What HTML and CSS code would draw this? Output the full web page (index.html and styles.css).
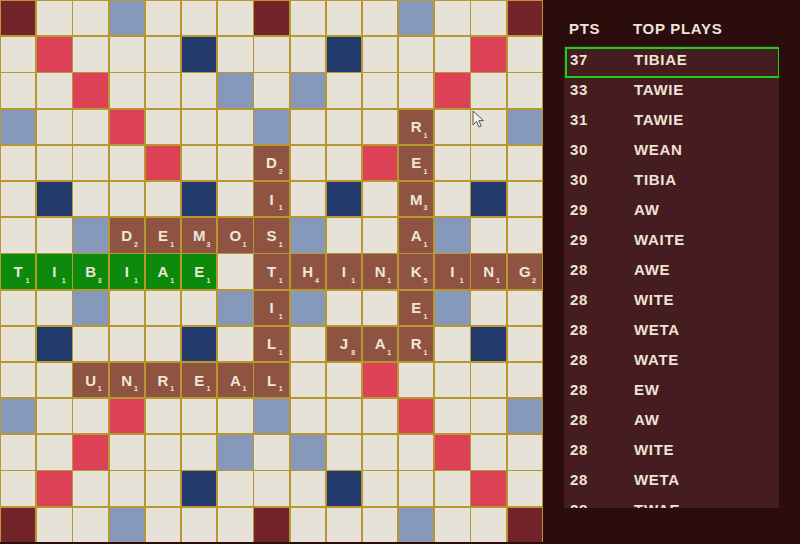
FILE: index.html
```html
<!DOCTYPE html>
<html>
<head>
<meta charset="utf-8">
<link rel="stylesheet" href="styles.css">
</head>
<body>
<div class="app">
  <div class="board">
    <!-- row 0 -->
    <div class="sq tw"></div><div class="sq"></div><div class="sq"></div><div class="sq dl"></div><div class="sq"></div><div class="sq"></div><div class="sq"></div><div class="sq tw"></div><div class="sq"></div><div class="sq"></div><div class="sq"></div><div class="sq dl"></div><div class="sq"></div><div class="sq"></div><div class="sq tw"></div>
    <!-- row 1 -->
    <div class="sq"></div><div class="sq dw"></div><div class="sq"></div><div class="sq"></div><div class="sq"></div><div class="sq tl"></div><div class="sq"></div><div class="sq"></div><div class="sq"></div><div class="sq tl"></div><div class="sq"></div><div class="sq"></div><div class="sq"></div><div class="sq dw"></div><div class="sq"></div>
    <!-- row 2 -->
    <div class="sq"></div><div class="sq"></div><div class="sq dw"></div><div class="sq"></div><div class="sq"></div><div class="sq"></div><div class="sq dl"></div><div class="sq"></div><div class="sq dl"></div><div class="sq"></div><div class="sq"></div><div class="sq"></div><div class="sq dw"></div><div class="sq"></div><div class="sq"></div>
    <!-- row 3 -->
    <div class="sq dl"></div><div class="sq"></div><div class="sq"></div><div class="sq dw"></div><div class="sq"></div><div class="sq"></div><div class="sq"></div><div class="sq dl"></div><div class="sq"></div><div class="sq"></div><div class="sq"></div><div class="sq t">R<i>1</i></div><div class="sq"></div><div class="sq"></div><div class="sq dl"></div>
    <!-- row 4 -->
    <div class="sq"></div><div class="sq"></div><div class="sq"></div><div class="sq"></div><div class="sq dw"></div><div class="sq"></div><div class="sq"></div><div class="sq t">D<i>2</i></div><div class="sq"></div><div class="sq"></div><div class="sq dw"></div><div class="sq t">E<i>1</i></div><div class="sq"></div><div class="sq"></div><div class="sq"></div>
    <!-- row 5 -->
    <div class="sq"></div><div class="sq tl"></div><div class="sq"></div><div class="sq"></div><div class="sq"></div><div class="sq tl"></div><div class="sq"></div><div class="sq t">I<i>1</i></div><div class="sq"></div><div class="sq tl"></div><div class="sq"></div><div class="sq t">M<i>3</i></div><div class="sq"></div><div class="sq tl"></div><div class="sq"></div>
    <!-- row 6 -->
    <div class="sq"></div><div class="sq"></div><div class="sq dl"></div><div class="sq t">D<i>2</i></div><div class="sq t">E<i>1</i></div><div class="sq t">M<i>3</i></div><div class="sq t">O<i>1</i></div><div class="sq t">S<i>1</i></div><div class="sq dl"></div><div class="sq"></div><div class="sq"></div><div class="sq t">A<i>1</i></div><div class="sq dl"></div><div class="sq"></div><div class="sq"></div>
    <!-- row 7 -->
    <div class="sq t g">T<i>1</i></div><div class="sq t g">I<i>1</i></div><div class="sq t g">B<i>3</i></div><div class="sq t g">I<i>1</i></div><div class="sq t g">A<i>1</i></div><div class="sq t g">E<i>1</i></div><div class="sq"></div><div class="sq t">T<i>1</i></div><div class="sq t">H<i>4</i></div><div class="sq t">I<i>1</i></div><div class="sq t">N<i>1</i></div><div class="sq t">K<i>5</i></div><div class="sq t">I<i>1</i></div><div class="sq t">N<i>1</i></div><div class="sq t">G<i>2</i></div>
    <!-- row 8 -->
    <div class="sq"></div><div class="sq"></div><div class="sq dl"></div><div class="sq"></div><div class="sq"></div><div class="sq"></div><div class="sq dl"></div><div class="sq t">I<i>1</i></div><div class="sq dl"></div><div class="sq"></div><div class="sq"></div><div class="sq t">E<i>1</i></div><div class="sq dl"></div><div class="sq"></div><div class="sq"></div>
    <!-- row 9 -->
    <div class="sq"></div><div class="sq tl"></div><div class="sq"></div><div class="sq"></div><div class="sq"></div><div class="sq tl"></div><div class="sq"></div><div class="sq t">L<i>1</i></div><div class="sq"></div><div class="sq t">J<i>8</i></div><div class="sq t">A<i>1</i></div><div class="sq t">R<i>1</i></div><div class="sq"></div><div class="sq tl"></div><div class="sq"></div>
    <!-- row 10 -->
    <div class="sq"></div><div class="sq"></div><div class="sq t">U<i>1</i></div><div class="sq t">N<i>1</i></div><div class="sq t">R<i>1</i></div><div class="sq t">E<i>1</i></div><div class="sq t">A<i>1</i></div><div class="sq t">L<i>1</i></div><div class="sq"></div><div class="sq"></div><div class="sq dw"></div><div class="sq"></div><div class="sq"></div><div class="sq"></div><div class="sq"></div>
    <!-- row 11 -->
    <div class="sq dl"></div><div class="sq"></div><div class="sq"></div><div class="sq dw"></div><div class="sq"></div><div class="sq"></div><div class="sq"></div><div class="sq dl"></div><div class="sq"></div><div class="sq"></div><div class="sq"></div><div class="sq dw"></div><div class="sq"></div><div class="sq"></div><div class="sq dl"></div>
    <!-- row 12 -->
    <div class="sq"></div><div class="sq"></div><div class="sq dw"></div><div class="sq"></div><div class="sq"></div><div class="sq"></div><div class="sq dl"></div><div class="sq"></div><div class="sq dl"></div><div class="sq"></div><div class="sq"></div><div class="sq"></div><div class="sq dw"></div><div class="sq"></div><div class="sq"></div>
    <!-- row 13 -->
    <div class="sq"></div><div class="sq dw"></div><div class="sq"></div><div class="sq"></div><div class="sq"></div><div class="sq tl"></div><div class="sq"></div><div class="sq"></div><div class="sq"></div><div class="sq tl"></div><div class="sq"></div><div class="sq"></div><div class="sq"></div><div class="sq dw"></div><div class="sq"></div>
    <!-- row 14 -->
    <div class="sq tw"></div><div class="sq"></div><div class="sq"></div><div class="sq dl"></div><div class="sq"></div><div class="sq"></div><div class="sq"></div><div class="sq tw"></div><div class="sq"></div><div class="sq"></div><div class="sq"></div><div class="sq dl"></div><div class="sq"></div><div class="sq"></div><div class="sq tw"></div>
  </div>

  <div class="panel">
    <div class="head"><span class="pts">PTS</span><span>TOP PLAYS</span></div>
    <div class="list">
      <div class="row sel"><span class="pts">37</span><span>TIBIAE</span></div>
      <div class="row"><span class="pts">33</span><span>TAWIE</span></div>
      <div class="row"><span class="pts">31</span><span>TAWIE</span></div>
      <div class="row"><span class="pts">30</span><span>WEAN</span></div>
      <div class="row"><span class="pts">30</span><span>TIBIA</span></div>
      <div class="row"><span class="pts">29</span><span>AW</span></div>
      <div class="row"><span class="pts">29</span><span>WAITE</span></div>
      <div class="row"><span class="pts">28</span><span>AWE</span></div>
      <div class="row"><span class="pts">28</span><span>WITE</span></div>
      <div class="row"><span class="pts">28</span><span>WETA</span></div>
      <div class="row"><span class="pts">28</span><span>WATE</span></div>
      <div class="row"><span class="pts">28</span><span>EW</span></div>
      <div class="row"><span class="pts">28</span><span>AW</span></div>
      <div class="row"><span class="pts">28</span><span>WITE</span></div>
      <div class="row"><span class="pts">28</span><span>WETA</span></div>
      <div class="row"><span class="pts">28</span><span>TWAE</span></div>
    </div>
  </div>

  <svg class="cursor" width="14" height="19" viewBox="0 0 14 19">
    <path d="M1 1 L1 15 L4.5 11.5 L7 17 L9.2 16 L6.8 10.6 L11.5 10.6 Z" fill="#f4f4f4" stroke="#555" stroke-width="1" stroke-linejoin="round"/>
  </svg>
</div>
</body>
</html>
```
FILE: styles.css
```css
html, body {
  margin: 0;
  padding: 0;
  background: #2b0d0d;
}

.app {
  position: relative;
  width: 800px;
  height: 544px;
  display: flex;
  overflow: hidden;
  background: #2b0d0d;
  font-family: "Liberation Sans", Arial, sans-serif;
}

.board {
  flex: none;
  display: grid;
  grid-template-columns: repeat(15, 34.4px);
  grid-auto-rows: 34.4px;
  gap: 1.8px;
  padding: 1px;
  background: #b8972e;
  height: 542px;
  box-sizing: border-box;
  align-content: start;
}

.sq {
  background: #e7e2d8;
}
.sq.dl { background: #8699bb; }
.sq.tl { background: #233a6d; }
.sq.dw { background: #dc4156; }
.sq.tw { background: #72242a; }

.sq.t {
  position: relative;
  background: #8e5441;
  color: #eee6da;
  display: flex;
  align-items: center;
  justify-content: center;
  font-weight: bold;
  font-size: 15px;
  line-height: 15px;
}
.sq.t.g { background: #0b8a0b; }

.sq.t i {
  position: absolute;
  right: 6px;
  bottom: 5px;
  font-style: normal;
  font-weight: bold;
  font-size: 7px;
  line-height: 7px;
}

.panel {
  flex: 1;
  padding-left: 21px;
  box-sizing: border-box;
  color: #efe3d6;
  font-weight: bold;
  font-size: 15px;
  letter-spacing: 0.7px;
}

.head {
  height: 46px;
  box-sizing: border-box;
  padding-top: 21px;
  padding-left: 5px;
  line-height: 16px;
  display: flex;
}

.pts {
  width: 64px;
  flex: none;
}

.list {
  position: relative;
  width: 215px;
  height: 462px;
  background: #451c1f;
  overflow: hidden;
}

.row {
  position: relative;
  height: 30px;
  line-height: 27px;
  padding-left: 6px;
  display: flex;
}

.row.sel::after {
  content: "";
  position: absolute;
  left: 1px;
  right: -1px;
  top: 1px;
  height: 31px;
  box-sizing: border-box;
  border: 2px solid #17d017;
}

.cursor {
  position: absolute;
  left: 472px;
  top: 110px;
}
```
